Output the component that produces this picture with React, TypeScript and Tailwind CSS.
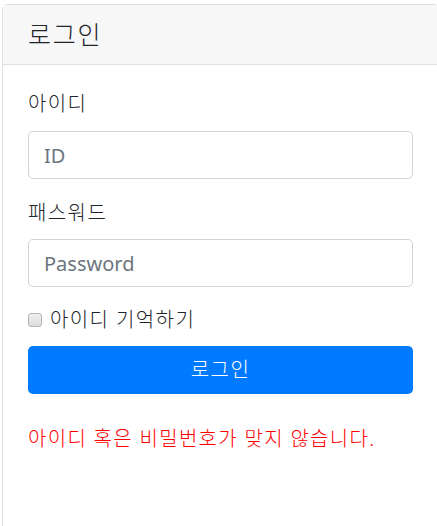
export default function App() {
  return (
    <div
      className="h-[526px] w-[437px] overflow-hidden bg-white pt-[4px] pl-[2px] text-[#212529]"
      style={{ fontFamily: '"Noto Sans", "Noto Sans CJK KR", sans-serif' }}
    >
      <div className="w-[437px] min-h-[560px] rounded-[5px] border border-[#dfdfdf] bg-white">
        {/* 카드 헤더 */}
        <div className="flex h-[60px] items-center border-b border-[#dfdfdf] bg-[#f7f7f7] px-[25px]">
          <h5 className="text-[25px] leading-none font-light tracking-[1.8px]">로그인</h5>
        </div>

        <div className="px-[25px] pt-[24px] font-light">
          <label className="block text-[20px] leading-[30px] tracking-[1.4px]">아이디</label>
          <input
            type="text"
            placeholder="ID"
            className="mt-[12px] block h-[48px] w-full rounded-[5px] border border-[#ced4da] px-[15px] text-[20px] font-normal placeholder:text-[#6c757d] outline-none"
          />

          <label className="mt-[19px] block text-[20px] leading-[30px] tracking-[1.4px]">패스워드</label>
          <input
            type="password"
            placeholder="Password"
            className="mt-[11px] block h-[48px] w-full rounded-[5px] border border-[#ced4da] px-[15px] text-[20px] font-normal placeholder:text-[#6c757d] outline-none"
          />

          <label className="mt-[18px] flex h-[30px] items-center gap-[8px] text-[20px] tracking-[1.4px]">
            <input
              type="checkbox"
              className="h-[14px] w-[14px] appearance-none rounded-[3px] border border-[#b4b4b4] bg-gradient-to-b from-[#f0f0f0] to-[#dcdcdc]"
            />
            아이디 기억하기
          </label>

          <button className="mt-[11px] flex h-[48px] w-full items-center justify-center rounded-[5px] bg-[#007bff] text-[20px] font-light tracking-[1.4px] text-white">
            로그인
          </button>

          <p className="mt-[30px] text-[20px] leading-[30px] tracking-[1.3px] text-[#ff0000]">
            아이디 혹은 비밀번호가 맞지 않습니다.
          </p>
        </div>
      </div>
    </div>
  );
}
